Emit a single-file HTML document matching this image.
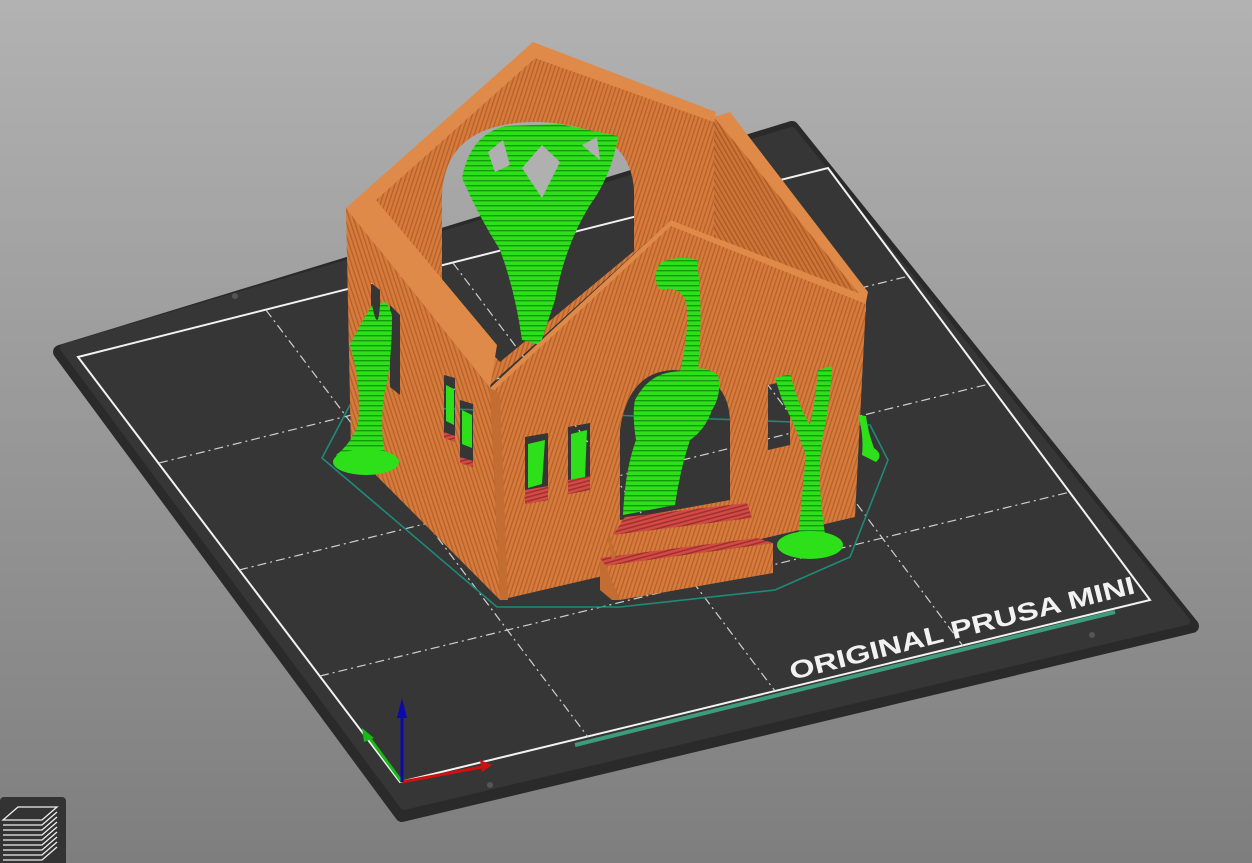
<!DOCTYPE html>
<html><head><meta charset="utf-8"><style>
html,body{margin:0;padding:0;width:1252px;height:863px;overflow:hidden;background:linear-gradient(#b2b2b2,#7e7e7e);}
svg{position:absolute;left:0;top:0}
</style></head><body>
<svg width="1252" height="863" viewBox="0 0 1252 863" xmlns="http://www.w3.org/2000/svg">
<defs>
<pattern id="st" width="4" height="4" patternUnits="userSpaceOnUse" patternTransform="rotate(18)"><rect width="4" height="4" fill="#d67b3c"/><rect width="1.3" height="4" fill="#b5612b"/></pattern>
<pattern id="stl" width="4" height="4" patternUnits="userSpaceOnUse" patternTransform="rotate(-18)"><rect width="4" height="4" fill="#d67b3c"/><rect width="1.3" height="4" fill="#b5612b"/></pattern>
<pattern id="st2" width="4" height="4" patternUnits="userSpaceOnUse" patternTransform="rotate(-30)"><rect width="4" height="4" fill="#cf7436"/><rect width="1.3" height="4" fill="#a85a26"/></pattern>
<pattern id="gr" width="5" height="5" patternUnits="userSpaceOnUse"><rect width="5" height="5" fill="#2ee01a"/><rect width="5" height="1.4" fill="#159a0a"/></pattern>
<pattern id="rd" width="4" height="4" patternUnits="userSpaceOnUse" patternTransform="rotate(75)"><rect width="4" height="4" fill="#d24a44"/><rect width="1.5" height="4" fill="#a03030"/></pattern>
</defs>
<!-- plate -->
<polygon points="60,352 792,128 1192,626 402,815" fill="#2a2a2a" stroke="#2a2a2a" stroke-width="14" stroke-linejoin="round"/>
<polygon points="205,302 250,290 252,300 207,312" fill="#2a2a2a"/>
<polygon points="64,348 792,131 1186,621 404,806" fill="#363636" stroke="#363636" stroke-width="8" stroke-linejoin="round"/>
<circle cx="235" cy="296" r="3" fill="#555"/><circle cx="490" cy="785" r="3" fill="#555"/><circle cx="1092" cy="635" r="3" fill="#555"/>
<polygon points="78,357 828,168 1150,600 400,782" fill="none" stroke="#f2f2f2" stroke-width="2"/>
<g stroke="#cfcfcf" stroke-width="1.2" stroke-dasharray="9,4,2,4" fill="none">
<line x1="266" y1="310" x2="588" y2="737"/><line x1="453" y1="263" x2="775" y2="691"/><line x1="641" y1="215" x2="963" y2="646"/>
<line x1="159" y1="463" x2="909" y2="276"/><line x1="239" y1="570" x2="989" y2="384"/><line x1="320" y1="676" x2="1070" y2="492"/>
</g>
<line x1="575" y1="745" x2="1115" y2="612" stroke="#3c9c7c" stroke-width="4"/>
<text x="0" y="0" transform="translate(792,680) rotate(-14.2)" font-family="Liberation Sans, sans-serif" font-weight="bold" font-size="25" fill="#f2f2f2" textLength="355" lengthAdjust="spacingAndGlyphs">ORIGINAL PRUSA MINI</text>
<!-- skirt -->
<polygon points="322,458 350,405 870,425 888,460 850,557 775,590 620,607 497,607" fill="none" stroke="#1f8a78" stroke-width="1.6"/>
<!-- right wall face -->
<polygon points="714,117 866,300 866,312 671,220 714,240" fill="url(#st2)"/>
<polygon points="714,117 730,112 868,292 866,302" fill="#e08a4a"/>
<!-- back inner face with arch hole -->
<path fill-rule="evenodd" fill="url(#st)" d="M376,200 L535,58 L714,117 L714,240 L671,220 L490,385 L376,226 Z M442,300 L442,195 Q445,122 537,122 Q630,125 634,190 L634,251 L500,362 Z"/>
<!-- roof strips -->
<polygon points="346,208 533,42 716,112 714,122 535,58 376,200" fill="#e08a4a"/>
<!-- back tree -->
<path fill="url(#gr)" d="M462,178 Q470,135 505,126 L560,124 L618,136 Q612,175 590,205 Q565,245 555,300 L540,345 L522,340 Q515,290 500,250 Q478,215 462,178 Z"/>
<polygon points="488,152 503,140 510,165 495,172" fill="#b0b0b0"/><polygon points="542,145 560,162 542,198 522,168" fill="#b0b0b0"/>
<polygon points="582,145 597,137 600,160" fill="#b0b0b0"/>
<!-- left outer face -->
<path fill-rule="evenodd" fill="url(#stl)" d="M346,208 L490,388 L500,600 L351,450 Z M444,375 L455,378 L455,440 L444,436 Z M460,400 L473,404 L473,465 L460,461 Z M371,283 L380,290 L380,385 L371,379 Z M390,305 L400,315 L400,395 L390,387 Z"/>
<polygon points="346,208 376,200 497,345 490,388" fill="#e08a4a"/>
<polygon points="446,385 454,389 454,425 446,421" fill="#2ee01a"/><polygon points="462,410 472,415 472,448 462,444" fill="#2ee01a"/>
<polygon points="444,432 455,436 455,442 444,438" fill="url(#rd)"/><polygon points="460,457 473,461 473,467 460,463" fill="url(#rd)"/>
<!-- front face -->
<path fill-rule="evenodd" fill="url(#st)" d="M490,388 L671,220 L866,302 L855,517 L500,600 Z M620,520 L620,430 Q628,372 673,370 Q728,372 730,420 L730,500 Z M525,437 L548,433 L548,500 L525,504 Z M568,427 L590,423 L590,490 L568,494 Z M768,385 L790,380 L790,445 L768,450 Z"/>
<polygon points="671,220 680,224 866,296 866,304 671,226 490,394 490,388" fill="#e08a4a"/>
<polygon points="490,388 500,394 508,600 500,600" fill="#c36d32"/>
<!-- window fills -->
<polygon points="528,444 545,440 542,484 528,488" fill="#2ee01a"/><polygon points="571,434 587,430 585,478 571,482" fill="#2ee01a"/>
<polygon points="525,490 548,486 548,500 525,504" fill="url(#rd)"/><polygon points="568,480 590,476 590,490 568,494" fill="url(#rd)"/>
<!-- door tree -->
<path fill="url(#gr)" d="M623,515 Q625,470 636,440 Q632,415 635,400 Q648,375 672,372 L690,370 Q705,365 718,375 Q722,395 712,410 Q705,430 690,440 Q680,470 675,505 Z"/>
<path fill="url(#gr)" d="M680,372 Q690,330 686,300 Q678,285 660,290 Q650,275 662,262 Q680,255 697,260 Q702,300 700,340 L698,372 Z"/>
<!-- left tree -->
<path fill="url(#gr)" d="M336,455 Q350,445 358,425 Q362,385 350,345 Q360,325 372,305 Q378,335 380,305 Q385,295 392,315 Q392,365 384,395 Q380,425 384,450 L396,457 Q380,472 360,472 Q336,468 336,455 Z"/>
<ellipse cx="366" cy="462" rx="33" ry="13" fill="#2ee01a"/>
<!-- right tree -->
<path fill="url(#gr)" d="M798,540 Q802,495 806,455 Q795,425 782,400 L775,378 L790,374 Q800,410 810,425 Q816,398 818,370 L832,366 Q830,405 822,440 Q816,480 826,540 Z"/>
<ellipse cx="810" cy="545" rx="33" ry="14" fill="#2ee01a"/>
<path d="M858,415 Q864,435 862,455 L876,462 Q884,455 874,448 Q868,432 866,416 Z" fill="#2ee01a"/>
<!-- steps -->
<polygon points="625,517 747,503 752,518 613,535" fill="url(#rd)"/>
<polygon points="613,535 752,518 757,538 616,556" fill="url(#st)"/>
<polygon points="600,558 757,538 773,543 605,566" fill="url(#rd)"/>
<polygon points="605,566 773,543 773,573 620,600" fill="url(#st)"/>
<polygon points="600,558 606,566 620,600 612,600 600,590" fill="#c36d32"/>
<polygon points="610,535 616,556 612,560 608,540" fill="#c36d32"/>
<!-- axes -->
<line x1="402" y1="782" x2="487" y2="766" stroke="#d01010" stroke-width="3"/>
<polygon points="480,760 492,765 482,772" fill="#d01010"/>
<line x1="402" y1="782" x2="368" y2="736" stroke="#18b818" stroke-width="3"/>
<polygon points="362,728 374,738 364,742" fill="#18b818"/>
<line x1="402" y1="782" x2="402" y2="712" stroke="#0a0aa8" stroke-width="3"/>
<polygon points="397,718 402,698 407,718" fill="#0a0aa8"/>
<!-- layers icon -->
<rect x="0" y="797" width="66" height="70" rx="4" fill="#333"/>
<g stroke="#eee" stroke-width="1.3" fill="none">
<polygon points="3,820 18,807 57,807 42,820"/>
<path d="M3,825 H42 L57,812 M3,830 H42 L57,817 M3,835 H42 L57,822 M3,840 H42 L57,827 M3,845 H42 L57,832 M3,850 H42 L57,837 M3,855 H42 L57,842 M3,860 H42 L57,847"/>
</g>
</svg>
</body></html>
